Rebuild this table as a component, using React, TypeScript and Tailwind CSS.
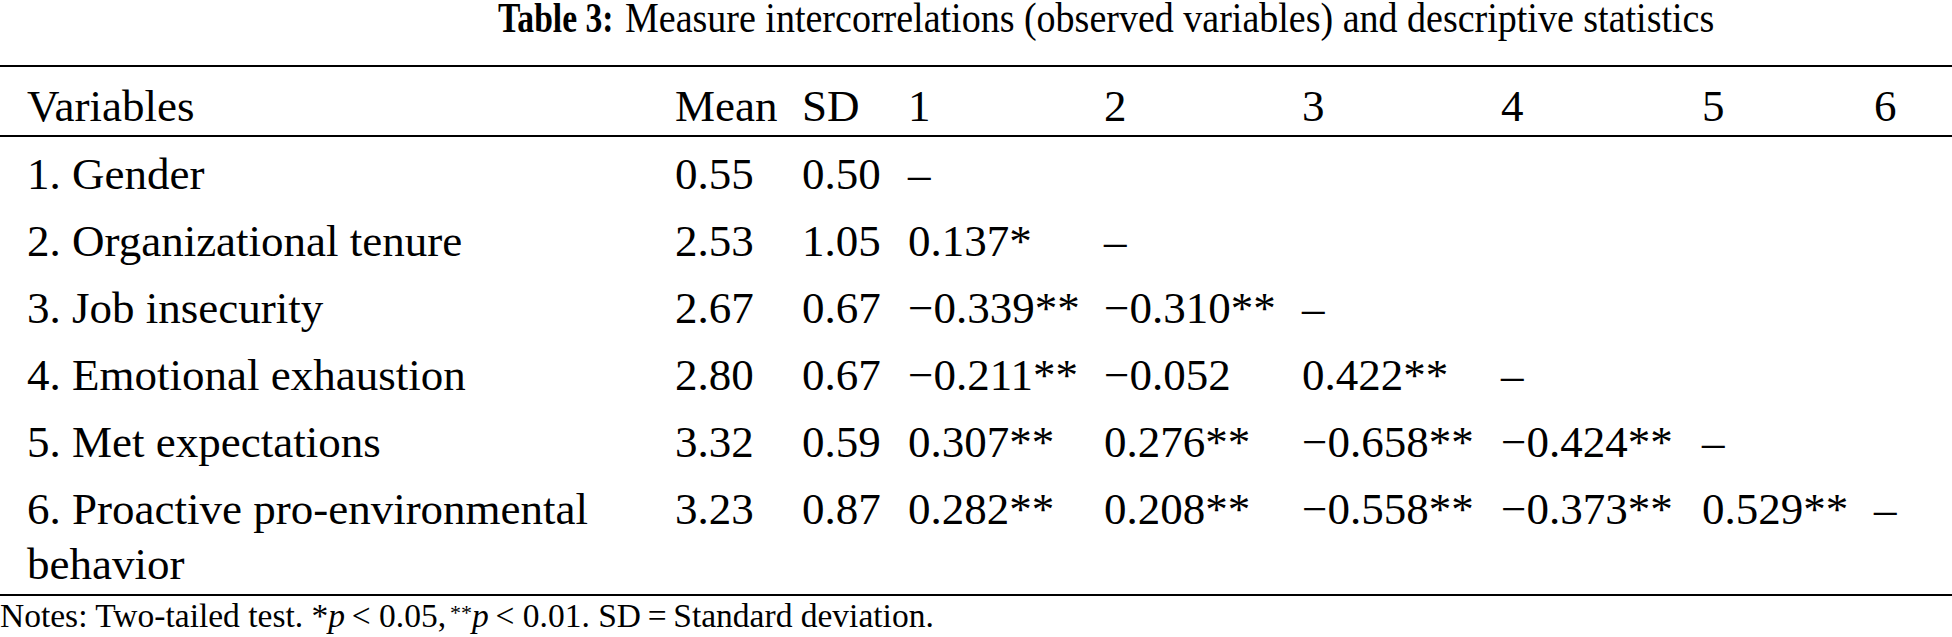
const rows: { label: string; mean: string; sd: string; r: string[] }[] = [
  { label: "1. Gender", mean: "0.55", sd: "0.50", r: ["–"] },
  { label: "2. Organizational tenure", mean: "2.53", sd: "1.05", r: ["0.137*", "–"] },
  { label: "3. Job insecurity", mean: "2.67", sd: "0.67", r: ["−0.339**", "−0.310**", "–"] },
  { label: "4. Emotional exhaustion", mean: "2.80", sd: "0.67", r: ["−0.211**", "−0.052", "0.422**", "–"] },
  { label: "5. Met expectations", mean: "3.32", sd: "0.59", r: ["0.307**", "0.276**", "−0.658**", "−0.424**", "–"] },
  {
    label: "6. Proactive pro-environmental behavior",
    mean: "3.23",
    sd: "0.87",
    r: ["0.282**", "0.208**", "−0.558**", "−0.373**", "0.529**", "–"],
  },
];

const cols = "grid grid-cols-[648px_127px_106px_196px_198px_199px_201px_172px_1fr] pl-[27px]";

export default function App() {
  return (
    <div className="min-h-screen w-[1952px] bg-white text-black font-['Liberation_Serif','Times_New_Roman',serif]">
      {/* title face in the source is a condensed Times, so squeeze it horizontally */}
      <h1 className="pl-[498px] text-[42px] leading-[36px] font-normal whitespace-nowrap">
        <span className="inline-block origin-left scale-x-[0.8] font-bold">Table 3:</span>
        <span className="inline-block origin-left scale-x-[0.905] ml-[-17px]">
          Measure intercorrelations (observed variables) and descriptive statistics
        </span>
      </h1>

      <div className="mt-[29px] border-t-2 border-black" />

      <div className={`${cols} pt-[12px] pb-[1px] text-[45px] leading-[55px]`}>
        <div>Variables</div>
        <div>Mean</div>
        <div>SD</div>
        <div>1</div>
        <div>2</div>
        <div>3</div>
        <div>4</div>
        <div>5</div>
        <div>6</div>
      </div>

      <div className="border-t-2 border-black" />

      {rows.map((row) => (
        <div key={row.label} className={`${cols} pt-[10px] pb-[2px] text-[45px] leading-[55px]`}>
          <div className="pr-4">{row.label}</div>
          <div>{row.mean}</div>
          <div>{row.sd}</div>
          {Array.from({ length: 6 }).map((_, i) => (
            <div key={i} className="whitespace-nowrap">
              {row.r[i] ?? ""}
            </div>
          ))}
        </div>
      ))}

      <div className="border-t-2 border-black" />

      <p className="mt-[1px] text-[33.5px] leading-[38px] whitespace-nowrap">
        Notes: Two-tailed test. *<i>p</i>{"\u2009"}&lt; 0.05,
        <sup className="ml-[4px] text-[22px] relative -top-[7px]">**</sup>
        <i>p</i>{"\u2009"}&lt; 0.01. SD{"\u2009"}={"\u2009"}Standard deviation.
      </p>
    </div>
  );
}
